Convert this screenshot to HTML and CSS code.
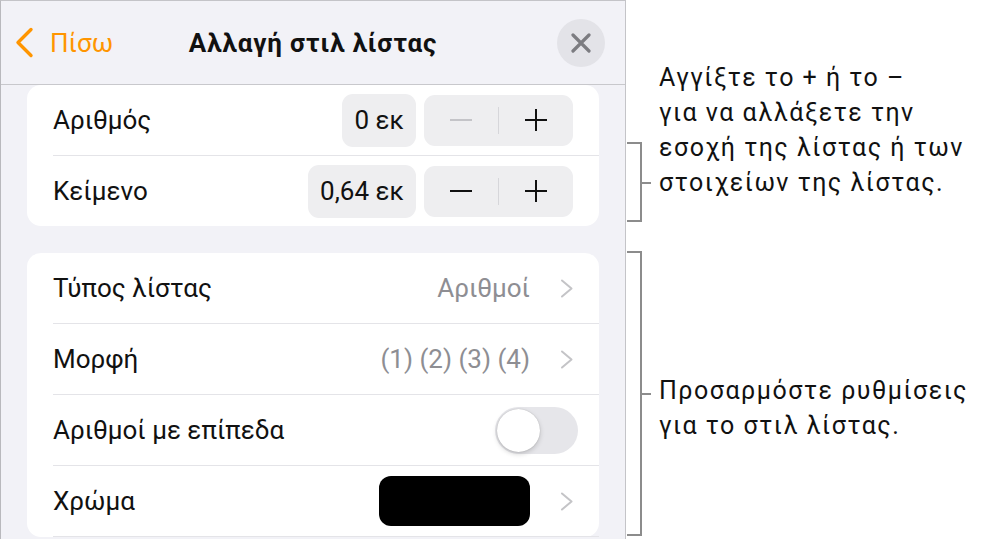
FILE: index.html
```html
<!DOCTYPE html>
<html lang="el">
<head>
<meta charset="utf-8">
<title>Αλλαγή στιλ λίστας</title>
<link rel="stylesheet" href="styles.css">
</head>
<body>
<div class="page">
  <div class="panel">
    <header class="nav">
      <div class="back">
        <svg class="back-icon" width="20" height="31" viewBox="0 0 20 31"><path d="M17 2.5 L4 15.5 L17 28.5" fill="none" stroke="#ff9500" stroke-width="3.4" stroke-linecap="round" stroke-linejoin="round"/></svg>
        <span>Πίσω</span>
      </div>
      <div class="title">Αλλαγή στιλ λίστας</div>
      <div class="close">
        <svg width="20" height="20" viewBox="0 0 20 20"><path d="M2 2 L18 18 M18 2 L2 18" fill="none" stroke="#7c7c81" stroke-width="3.2" stroke-linecap="round"/></svg>
      </div>
    </header>
    <div class="content">
      <section class="card card-indent">
        <div class="row">
          <span class="label">Αριθμός</span>
          <div class="controls">
            <span class="pill">0 εκ</span>
            <div class="stepper">
              <span class="step"><svg width="22" height="22" viewBox="0 0 22 22"><path d="M0 11 H22" stroke="#c4c4c8" stroke-width="2"/></svg></span>
              <span class="step-div"></span>
              <span class="step"><svg width="22" height="22" viewBox="0 0 22 22"><path d="M0 11 H22 M11 0 V22" stroke="#111" stroke-width="2"/></svg></span>
            </div>
          </div>
        </div>
        <div class="row">
          <span class="label">Κείμενο</span>
          <div class="controls">
            <span class="pill">0,64 εκ</span>
            <div class="stepper">
              <span class="step"><svg width="22" height="22" viewBox="0 0 22 22"><path d="M0 11 H22" stroke="#111" stroke-width="2"/></svg></span>
              <span class="step-div"></span>
              <span class="step"><svg width="22" height="22" viewBox="0 0 22 22"><path d="M0 11 H22 M11 0 V22" stroke="#111" stroke-width="2"/></svg></span>
            </div>
          </div>
        </div>
      </section>
      <section class="card card-style">
        <div class="row">
          <span class="label">Τύπος λίστας</span>
          <div class="controls">
            <span class="value">Αριθμοί</span>
            <svg class="chev" width="14" height="19" viewBox="0 0 14 19"><path d="M2 1.5 L11.5 9.5 L2 17.5" fill="none" stroke="#c4c4c7" stroke-width="2" stroke-linecap="round" stroke-linejoin="round"/></svg>
          </div>
        </div>
        <div class="row">
          <span class="label">Μορφή</span>
          <div class="controls">
            <span class="value">(1) (2) (3) (4)</span>
            <svg class="chev" width="14" height="19" viewBox="0 0 14 19"><path d="M2 1.5 L11.5 9.5 L2 17.5" fill="none" stroke="#c4c4c7" stroke-width="2" stroke-linecap="round" stroke-linejoin="round"/></svg>
          </div>
        </div>
        <div class="row row-toggle">
          <span class="label">Αριθμοί με επίπεδα</span>
          <div class="toggle"><span class="knob"></span></div>
        </div>
        <div class="row">
          <span class="label">Χρώμα</span>
          <div class="controls">
            <span class="swatch"></span>
            <svg class="chev" width="14" height="19" viewBox="0 0 14 19"><path d="M2 1.5 L11.5 9.5 L2 17.5" fill="none" stroke="#c4c4c7" stroke-width="2" stroke-linecap="round" stroke-linejoin="round"/></svg>
          </div>
        </div>
      </section>
    </div>
  </div>
  <aside class="notes">
    <div class="callout callout-indent">
      <div class="bracket"></div>
      <p class="note">Αγγίξτε το + ή το –<br>για να αλλάξετε την<br>εσοχή της λίστας ή των<br>στοιχείων της λίστας.</p>
    </div>
    <div class="callout callout-style">
      <div class="bracket"></div>
      <p class="note">Προσαρμόστε ρυθμίσεις<br>για το στιλ λίστας.</p>
    </div>
  </aside>
</div>
</body>
</html>
```

FILE: styles.css
```css
* { box-sizing: border-box; }

html, body {
  margin: 0;
  padding: 0;
  background: #ffffff;
}

body {
  font-family: Roboto, "Liberation Sans", sans-serif;
  color: #111111;
  width: 988px;
  height: 539px;
  overflow: hidden;
}

.page {
  display: flex;
  height: 539px;
  overflow: hidden;
}

/* ---------- panel ---------- */
.panel {
  width: 626px;
  flex: 0 0 626px;
  height: 539px;
  background: #f2f2f7;
  border-top: 1px solid #c4c4c8;
  border-left: 1px solid #b9b9bd;
  border-right: 1px solid #c4c4c8;
  overflow: hidden;
}

.nav {
  height: 84px;
  border-bottom: 1px solid #c8c8cc;
  display: grid;
  grid-template-columns: 1fr auto 1fr;
  align-items: center;
  padding: 0 20px;
}

.back {
  display: flex;
  align-items: center;
  gap: 16px;
  margin-left: -7px;
  color: #ff9500;
  font-size: 26px;
}

.back-icon { display: block; }

.title {
  font-size: 26px;
  font-weight: 700;
  color: #111;
  letter-spacing: 0.85px;
}

.close {
  justify-self: end;
  width: 48px;
  height: 48px;
  border-radius: 50%;
  background: #e3e3e8;
  display: flex;
  align-items: center;
  justify-content: center;
}

.close svg { display: block; }

.content {
  padding: 0 26px;
}

.card {
  background: #ffffff;
  border-radius: 14px;
}

.card-style {
  margin-top: 27px;
}

.row {
  height: 71px;
  margin-left: 26px;
  padding-right: 26px;
  border-bottom: 1px solid #e4e4e8;
  display: flex;
  align-items: center;
  justify-content: space-between;
  font-size: 26px;
}

.card-indent .row:last-child { border-bottom: none; height: 70px; }

.label { color: #111; }

.controls {
  display: flex;
  align-items: center;
}

.pill {
  height: 53px;
  padding: 0 12px;
  border-radius: 11px;
  background: #eeeef0;
  display: flex;
  align-items: center;
  color: #111;
}

.stepper {
  margin-left: 8px;
  width: 149px;
  height: 51px;
  border-radius: 11px;
  background: #eeeef0;
  display: flex;
  align-items: center;
}

.step {
  flex: 1;
  display: flex;
  align-items: center;
  justify-content: center;
}

.step svg { display: block; }

.step-div {
  width: 1px;
  height: 27px;
  background: #d6d6da;
}

.value {
  color: #8e8e93;
}

.chev {
  display: block;
  margin-left: 30px;
  margin-right: -1px;
}

.swatch {
  width: 151px;
  height: 50px;
  border-radius: 12px;
  background: #000000;
}

.row-toggle { padding-right: 21px; }

.toggle {
  width: 83px;
  height: 47px;
  border-radius: 24px;
  background: #e6e6ea;
  padding: 2px;
  display: flex;
  align-items: center;
}

.knob {
  width: 43px;
  height: 43px;
  border-radius: 50%;
  background: #ffffff;
  box-shadow: 0 2px 5px rgba(0, 0, 0, 0.18), 0 0 1px rgba(0, 0, 0, 0.25);
}

/* ---------- annotations ---------- */
.notes {
  flex: 1;
  display: flex;
  flex-direction: column;
}

.callout {
  display: flex;
  align-items: flex-start;
}

.callout-indent { margin-top: 60px; }
.callout-style { margin-top: 29px; }

.bracket {
  position: relative;
  margin-left: 1px;
  width: 15px;
  border-top: 2px solid #8c8c8c;
  border-right: 2px solid #8c8c8c;
  border-bottom: 2px solid #8c8c8c;
}

.bracket::after {
  content: "";
  position: absolute;
  left: 13px;
  width: 11px;
  height: 2px;
  background: #8c8c8c;
}

.callout-indent .bracket { margin-top: 82px; height: 80px; }
.callout-indent .bracket::after { top: 38px; }

.callout-style .bracket { margin-top: 0; height: 285px; }
.callout-style .bracket::after { top: 140px; }

.note {
  margin: 0 0 0 17px;
  font-family: Roboto, "Liberation Sans", sans-serif;
  font-size: 25px;
  letter-spacing: 1.5px;
  line-height: 35px;
  color: #111;
  white-space: nowrap;
}

.callout-style .note { margin-top: 122px; }
```
